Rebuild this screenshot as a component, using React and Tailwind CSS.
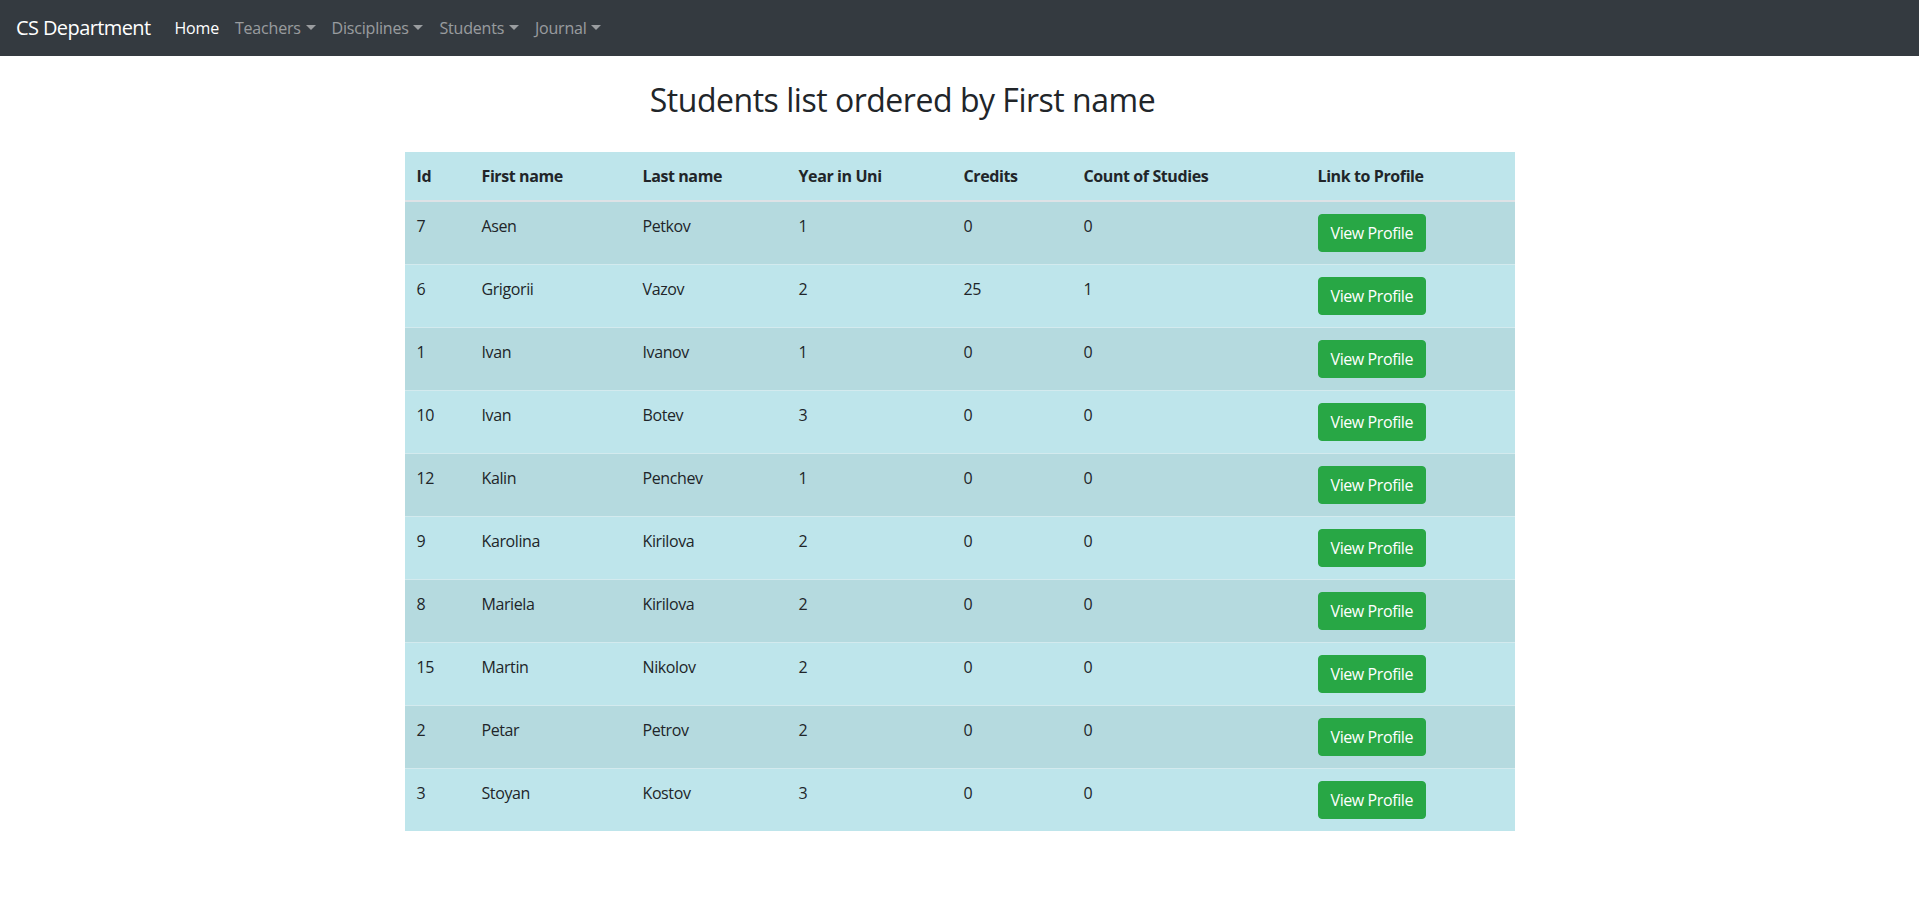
import React from 'react';

const students = [
    { id: 7, first: 'Asen', last: 'Petkov', year: 1, credits: 0, studies: 0 },
    { id: 6, first: 'Grigorii', last: 'Vazov', year: 2, credits: 25, studies: 1 },
    { id: 1, first: 'Ivan', last: 'Ivanov', year: 1, credits: 0, studies: 0 },
    { id: 10, first: 'Ivan', last: 'Botev', year: 3, credits: 0, studies: 0 },
    { id: 12, first: 'Kalin', last: 'Penchev', year: 1, credits: 0, studies: 0 },
    { id: 9, first: 'Karolina', last: 'Kirilova', year: 2, credits: 0, studies: 0 },
    { id: 8, first: 'Mariela', last: 'Kirilova', year: 2, credits: 0, studies: 0 },
    { id: 15, first: 'Martin', last: 'Nikolov', year: 2, credits: 0, studies: 0 },
    { id: 2, first: 'Petar', last: 'Petrov', year: 2, credits: 0, studies: 0 },
    { id: 3, first: 'Stoyan', last: 'Kostov', year: 3, credits: 0, studies: 0 },
];

const Caret = () => (
    <span className="inline-block w-0 h-0 ml-[0.3em] align-[0.255em] border-t-[0.32em] border-t-current border-x-[0.32em] border-x-transparent" />
);

const NavLink = ({ label, active, dropdown }) => (
    <a
        href="#"
        className={active ? 'px-2 py-2 text-white tracking-[-0.012em]' : 'px-2 py-2 text-white/50 tracking-[-0.012em]'}
    >
        {label}
        {dropdown && <Caret />}
    </a>
);

const App = () => {
    return (
        <div className="min-h-screen bg-white text-[#212529] text-base leading-6 tracking-[-0.025em]" style={{ fontFamily: '"Open Sans", "Liberation Sans", sans-serif' }}>
            {/* Navbar */}
            <nav className="h-14 bg-[#343a40] flex items-center px-4">
                <a href="#" className="text-xl text-white mr-4 leading-[30px] py-[5px] tracking-[-0.03em]">CS Department</a>
                <div className="flex items-center">
                    <NavLink label="Home" active />
                    <NavLink label="Teachers" dropdown />
                    <NavLink label="Disciplines" dropdown />
                    <NavLink label="Students" dropdown />
                    <NavLink label="Journal" dropdown />
                </div>
            </nav>

            <div className="w-[1110px] mx-auto">
                <h2 className="mt-[25px] pr-[114px] text-center text-[32px] leading-[38px] font-medium tracking-[-0.015em]">
                    Students list ordered by First name
                </h2>

                <table className="w-full mt-[33px] border-collapse bg-[#bee5eb]">
                    <thead>
                        <tr className="border-b-2 border-[#dee2e6] text-left font-bold">
                            <th className="w-[65px] px-3 py-3">Id</th>
                            <th className="w-[161px] px-3 py-3">First name</th>
                            <th className="w-[156px] px-3 py-3">Last name</th>
                            <th className="w-[165px] px-3 py-3">Year in Uni</th>
                            <th className="w-[120px] px-3 py-3">Credits</th>
                            <th className="w-[234px] px-3 py-3">Count of Studies</th>
                            <th className="px-3 py-3">Link to Profile</th>
                        </tr>
                    </thead>
                    <tbody>
                        {students.map((s, i) => (
                            <tr key={s.id} className={i % 2 === 0 ? 'bg-[#b5dadf] border-t border-[#d3eaee]' : 'border-t border-[#d3eaee]'}>
                                <td className="px-3 py-3 align-top">{s.id}</td>
                                <td className="px-3 py-3 align-top">{s.first}</td>
                                <td className="px-3 py-3 align-top">{s.last}</td>
                                <td className="px-3 py-3 align-top">{s.year}</td>
                                <td className="px-3 py-3 align-top">{s.credits}</td>
                                <td className="px-3 py-3 align-top">{s.studies}</td>
                                <td className="px-3 py-3 align-top">
                                    <button className="h-[38px] px-3 rounded bg-[#28a745] border border-[#28a745] text-white">
                                        View Profile
                                    </button>
                                </td>
                            </tr>
                        ))}
                    </tbody>
                </table>
            </div>
        </div>
    );
};

export default App;
